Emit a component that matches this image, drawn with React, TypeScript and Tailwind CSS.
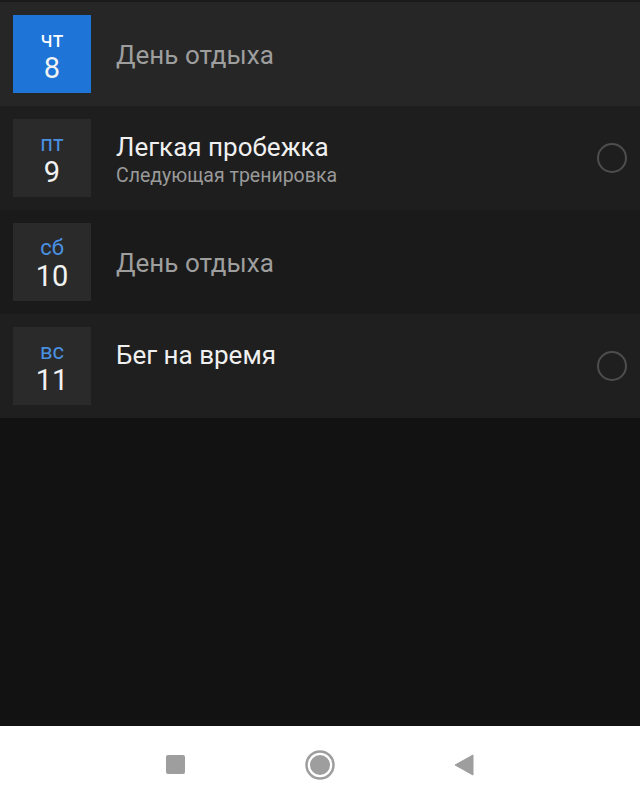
import React from "react";

type Day = {
  abbr: string;
  num: string;
  title: string;
  subtitle?: string;
  rest: boolean;
  today?: boolean;
  bg: string;
};

const days: Day[] = [
  { abbr: "чт", num: "8", title: "День отдыха", rest: true, today: true, bg: "bg-[#262626]" },
  { abbr: "пт", num: "9", title: "Легкая пробежка", subtitle: "Следующая тренировка", rest: false, bg: "bg-[#1e1e1e]" },
  { abbr: "сб", num: "10", title: "День отдыха", rest: true, bg: "bg-[#1a1a1a]" },
  { abbr: "вс", num: "11", title: "Бег на время", rest: false, bg: "bg-[#1f1f1f]" },
];

function Row({ d }: { d: Day }) {
  return (
    <div className={`flex h-[104px] items-stretch ${d.bg}`}>
      <div className="p-[13px]">
        <div
          className={`flex h-[78px] w-[78px] flex-col items-center justify-center pt-[3px] ${
            d.today ? "bg-[#1f74d8]" : "bg-[#2a2a2a]"
          }`}
        >
          <div className={`text-[22px] leading-[24px] ${d.today ? "text-white" : "text-[#4a90e2]"}`}>{d.abbr}</div>
          <div className="text-[29px] leading-[32px] text-[#f2f2f2]">{d.num}</div>
        </div>
      </div>
      {d.rest ? (
        <div className="flex flex-1 items-center pl-[12px] pt-[3px] text-[26px] text-[#9e9e9e]">{d.title}</div>
      ) : (
        <div className="flex flex-1 items-center">
          <div className="flex flex-1 flex-col self-start pl-[12px] pt-[25px]">
            <div className="text-[26px] leading-[32px] text-[#f0f0f0]">{d.title}</div>
            {d.subtitle && <div className="text-[19.5px] leading-[26px] text-[#9a9a9a]">{d.subtitle}</div>}
          </div>
          <div className="mr-[13px] h-[30px] w-[30px] rounded-full border-2 border-[#4e4e4e]" />
        </div>
      )}
    </div>
  );
}

export default function App() {
  return (
    <div className="flex h-[803px] w-[640px] flex-col bg-[#121212]" style={{ fontFamily: "Roboto, 'Noto Sans', sans-serif" }}>
      <div className="h-[2px] bg-[#1a1a1a]" />
      {days.map((d, i) => (
        <Row key={i} d={d} />
      ))}
      <div className="flex-1" />
      <div className="flex h-[77px] items-center justify-center bg-white">
        <div className="flex w-[308px] items-center justify-between">
          <div className="h-[19px] w-[19px] rounded-[2px] bg-[#9e9e9e]" />
          <svg width="30" height="30" viewBox="0 0 30 30">
            <circle cx="15" cy="15" r="13.5" fill="none" stroke="#9e9e9e" strokeWidth="2.5" />
            <circle cx="15" cy="15" r="10" fill="#9e9e9e" />
          </svg>
          <svg width="20" height="22" viewBox="0 0 20 22">
            <path d="M19 1 L1 11 L19 21 Z" fill="#9e9e9e" strokeLinejoin="round" stroke="#9e9e9e" strokeWidth="1" />
          </svg>
        </div>
      </div>
    </div>
  );
}
